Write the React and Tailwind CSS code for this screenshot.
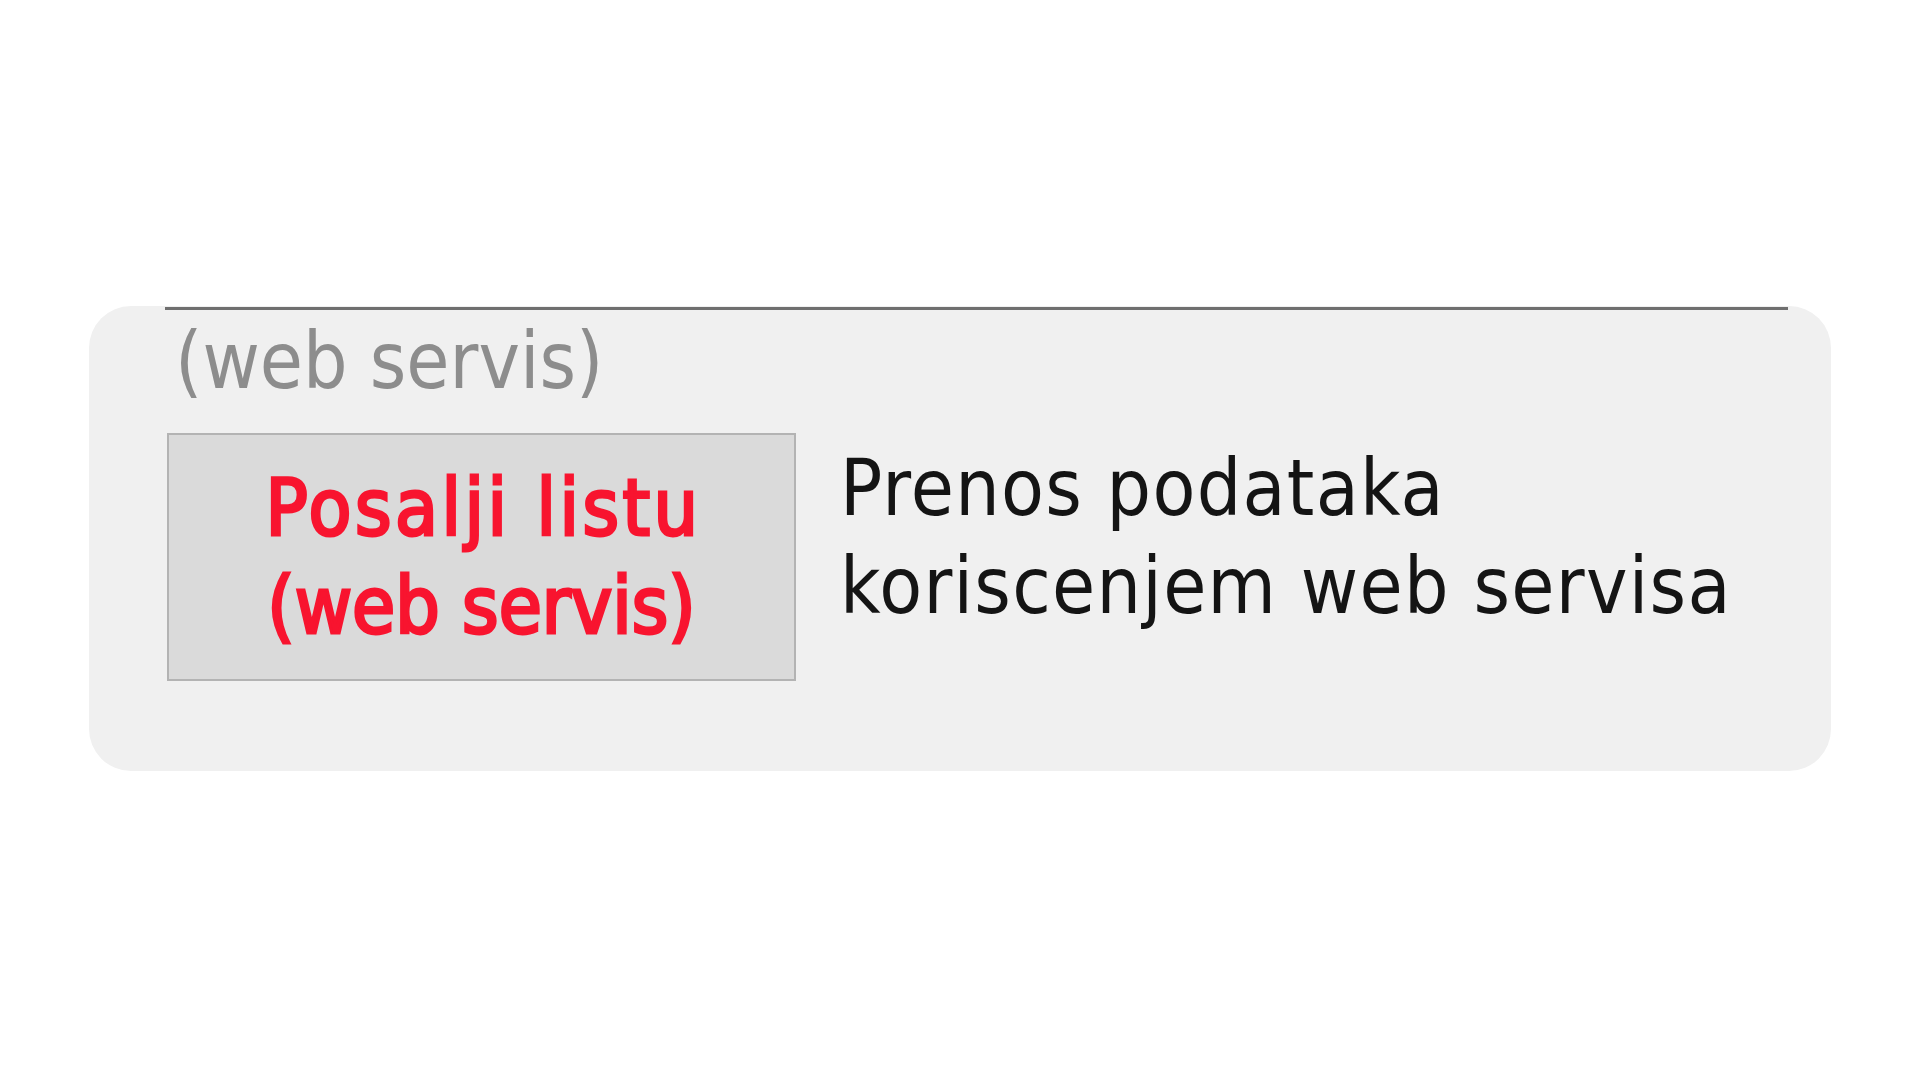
import React from 'react';

const font = { fontFamily: '"DejaVu Sans Condensed", "DejaVu Sans", sans-serif' };

const App = () => {
  return (
    <div className="min-h-screen w-full bg-white pt-[306px] pl-[89px]">
      <div
        className="w-[1742px] h-[465px] rounded-[42px] bg-[#f0f0f0] font-stretch-condensed"
        style={font}
      >
        <div className="ml-[76px] mr-[43px] pt-[1px]">
          <div className="h-[3px] bg-[#6f6f6f]"></div>
        </div>

        <div className="pl-[86px] text-[78px] leading-[78px] text-[#8d8d8d] mt-[12px]">
          (web servis)
        </div>

        <div className="flex items-start pl-[78px] mt-[33px]">
          <button className="w-[629px] h-[248px] bg-[#dadada] border-2 border-[#b3b3b3] flex flex-col items-center justify-center text-[78px] leading-[98px] text-[#f8142f] [-webkit-text-stroke:3px_#f8142f]">
            <span className="tracking-[3.5px] pl-[4px]">Posalji listu</span>
            <span>(web servis)</span>
          </button>
          <div className="ml-[44px] pt-[6px] text-[78px] leading-[98px] tracking-[1.3px] text-[#141414]">
            <div>Prenos podataka</div>
            <div>koriscenjem web servisa</div>
          </div>
        </div>
      </div>
    </div>
  );
};

export default App;
